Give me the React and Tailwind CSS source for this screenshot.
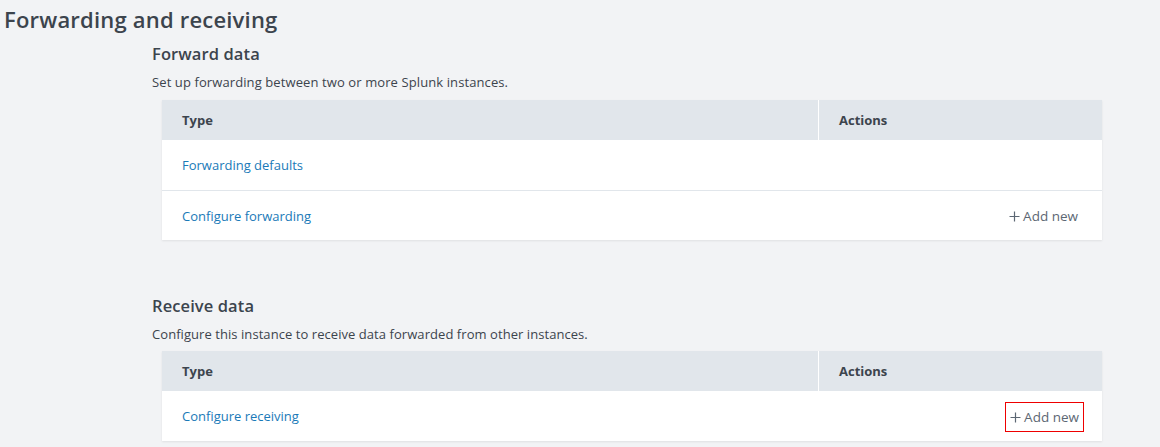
import React from "react";

function Plus() {
  return (
    <svg width="11" height="11" viewBox="0 0 11 11" className="shrink-0">
      <path d="M5.5 0.5v10M0.5 5.5h10" stroke="#5c6773" strokeWidth="1.2" fill="none" />
    </svg>
  );
}

function Table({ rows }) {
  return (
    <div className="ml-[10px] w-[940px] bg-white shadow-[0_1px_2px_rgba(0,0,0,0.08)]">
      <div className="flex h-[40px] bg-[#e1e6eb] text-[13px] font-bold text-[#3c444d]">
        <div className="flex w-[657px] items-center border-r border-white pl-[20px] pt-[2px]">Type</div>
        <div className="flex flex-1 items-center pl-[20px] pt-[2px]">Actions</div>
      </div>
      {rows.map((r, i) => (
        <div
          key={i}
          className={
            "flex h-[50px] items-center justify-between pl-[20px] pr-[24px] pt-[2px] text-[13px] " +
            (i > 0 ? "border-t border-[#e1e6eb]" : "")
          }
        >
          <span className="text-[#1a7ab8]">{r.label}</span>
          {r.add && (
            <span
              className={
                "flex items-center gap-[3px] text-[13.5px] text-[#5c6773] " +
                (r.boxed ? "outline outline-1 outline-[#e00] outline-offset-[0px] px-[4px] pt-[4px] pb-[4px] -mr-[5px]" : "")
              }
            >
              <Plus />
              Add new
            </span>
          )}
        </div>
      ))}
    </div>
  );
}

export default function App() {
  return (
    <div
      className="h-[447px] w-full overflow-hidden bg-[#f2f3f5] text-[#3c444d]"
      style={{ fontFamily: '"Open Sans", "Liberation Sans", sans-serif' }}
    >
      <h1 className="pl-[4px] pt-[5px] text-[22px] font-semibold leading-[28px] tracking-[0.2px] text-[#3c444d]">
        Forwarding and receiving
      </h1>
      <div className="ml-[152px] mt-[10px]">
        <h2 className="text-[16.5px] font-semibold leading-[22px] tracking-[0.1px]">Forward data</h2>
        <p className="mt-[8px] text-[13px] leading-[18px] tracking-[0.1px]">
          Set up forwarding between two or more Splunk instances.
        </p>
        <div className="mt-[9px]">
          <Table
            rows={[
              { label: "Forwarding defaults" },
              { label: "Configure forwarding", add: true },
            ]}
          />
        </div>
        <h2 className="mt-[55px] text-[16.5px] font-semibold leading-[22px] tracking-[0.1px]">Receive data</h2>
        <p className="mt-[8px] text-[13px] leading-[18px] tracking-[0.06px]">
          Configure this instance to receive data forwarded from other instances.
        </p>
        <div className="mt-[8px]">
          <Table rows={[{ label: "Configure receiving", add: true, boxed: true }]} />
        </div>
      </div>
    </div>
  );
}
